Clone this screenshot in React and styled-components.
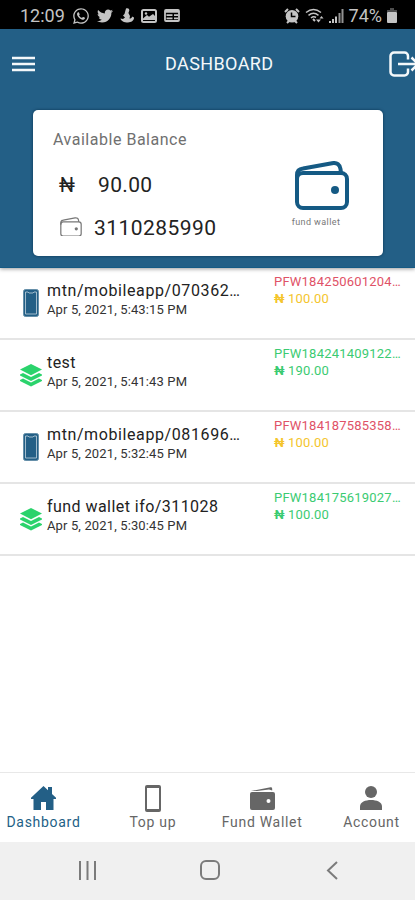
import React from 'react';
import styled, { createGlobalStyle } from 'styled-components';
import { FaWhatsapp, FaTwitter } from 'react-icons/fa';

const blue = '#235f86';
const darkBlue = '#155a84';
const grey = '#666';

const GlobalStyle = createGlobalStyle`
  body {
    margin: 0;
    font-family: Roboto, sans-serif;
    color: #222;
    background: #fff;
  }

  svg {
    display: block;
    flex: none;
  }
`;

const Screen = styled.div`
  display: flex;
  flex-direction: column;
  width: 415px;
  height: 900px;
  overflow: hidden;
`;

const StatusBar = styled.div`
  display: flex;
  justify-content: space-between;
  align-items: center;
  box-sizing: border-box;
  height: 29px;
  padding: 2px 18px 0 20px;
  background: #000;
  color: #c4c4c4;
  font-size: 18px;
`;

const StatusGroup = styled.div`
  display: flex;
  align-items: center;
  gap: ${({ gap }) => gap}px;
`;

const Hero = styled.header`
  height: 239px;
  flex: none;
  background: ${blue};
  box-shadow: 0 1px 4px rgba(0, 0, 0, 0.4);
  border-bottom: 1px solid ${darkBlue};
  box-sizing: border-box;
`;

const TitleBar = styled.div`
  display: grid;
  grid-template-columns: 60px 1fr 34px;
  align-items: center;
  height: 69px;
  color: #f4f8fa;
`;

const MenuButton = styled.div`
  padding-left: 12px;
`;

const Title = styled.h1`
  margin: 0;
  padding-left: 105px;
  font-size: 18px;
  font-weight: 400;
  letter-spacing: 0.4px;
`;

const LogoutButton = styled.div`
  padding-left: 8px;
  overflow: hidden;
`;

const Card = styled.section`
  display: flex;
  box-sizing: border-box;
  width: 350px;
  height: 146px;
  margin: 12px 0 0 33px;
  padding: 20px 20px 0;
  border-radius: 5px;
  background: #fff;
  box-shadow: 0 0 3px rgba(0, 40, 70, 0.8);
`;

const Balance = styled.div`
  width: 233px;
`;

const BalanceLabel = styled.div`
  margin-bottom: 11px;
  line-height: 20px;
  font-size: 16px;
  letter-spacing: 0.52px;
  color: #707070;
`;

const BalanceLine = styled.div`
  display: grid;
  grid-template-columns: ${({ indent }) => indent}px auto;
  align-items: center;
  height: ${({ height }) => height}px;
  padding-left: 6px;
  font-size: 21px;
  letter-spacing: ${({ spacing }) => spacing}px;
`;

const Naira = styled.span`
  font-size: 20px;
`;

const WalletIcon = styled.span`
  padding: 0 0 2px 1px;
  color: #777;
`;

const FundButton = styled.div`
  display: flex;
  flex-direction: column;
  align-items: center;
  width: 60px;
  padding: 31px 0 0 6px;
  color: ${darkBlue};
`;

const FundLabel = styled.span`
  margin: 6px 12px 0 0;
  font-size: 9px;
  line-height: 12px;
  letter-spacing: 0.4px;
  white-space: nowrap;
  color: #777;
`;

const List = styled.main`
  flex: 1;
`;

const Item = styled.div`
  display: grid;
  grid-template-columns: 47px 227px 141px;
  box-sizing: border-box;
  height: 72px;
  border-bottom: 2px solid #e5e5e5;
`;

const ItemIcon = styled.div`
  display: flex;
  justify-content: center;
  padding: ${({ top }) => top}px 0 0 15px;
`;

const ItemName = styled.div`
  margin-top: 13px;
  line-height: 20px;
  font-size: 16px;
  letter-spacing: ${({ wide }) => (wide ? 0.6 : 0.45)}px;
`;

const ItemDate = styled.div`
  line-height: 18px;
  font-size: 13px;
  letter-spacing: 0.13px;
  color: #333;
`;

const Reference = styled.div`
  margin-top: 6px;
  line-height: 16px;
  font-size: 13px;
  letter-spacing: 0.22px;
  color: ${({ failed }) => (failed ? '#df5267' : '#3bcb72')};
`;

const Amount = styled.div`
  line-height: 17px;
  font-size: 13px;
  letter-spacing: 0.15px;
  color: ${({ failed }) => (failed ? '#f4c52d' : '#3bcb72')};
`;

const AmountSign = styled.span`
  font-weight: 700;
`;

const Tabs = styled.nav`
  display: grid;
  grid-template-columns: repeat(4, 87px);
  justify-content: space-between;
  flex: none;
  box-sizing: border-box;
  height: 70px;
  border-top: 1px solid #e8e8e8;
`;

const Tab = styled.div`
  display: flex;
  flex-direction: column;
  align-items: center;
  color: ${({ active }) => (active ? blue : grey)};
`;

const TabIcon = styled.div`
  display: flex;
  align-items: center;
  height: 28px;
  margin-top: 11px;
`;

const TabLabel = styled.span`
  margin-top: 1px;
  line-height: 18px;
  font-size: 14px;
  letter-spacing: 0.7px;
  white-space: nowrap;
`;

const SystemBar = styled.footer`
  display: flex;
  justify-content: space-between;
  align-items: center;
  flex: none;
  box-sizing: border-box;
  height: 58px;
  padding: 0 77px 2px 78px;
  background: #f0f0f0;
`;

const Swan = () => (
  <svg width="14" height="15" viewBox="0 0 14 15" fill="currentColor">
    <path d="M6 .5C8-.3 9.500.8 9.300 2.500L8.400 5 10 8l-.5 2.500c1.500 0 2.500-.5 2.500-2l2 1c.2 3-2.500 5-6 5C4 14.500 1 13 .5 10.500L3 11l2-1.500-2-2L4.500 6l.8-3z" />
  </svg>
);

const Photo = () => (
  <svg width="16" height="14" viewBox="0 0 16 14">
    <rect x="1" y="1" width="14" height="12" rx="1.500" fill="none" stroke="currentColor" strokeWidth="2" />
    <path d="M2 11V9.500L6 6l2 1.700L12 5l2 2v4z" fill="currentColor" />
    <circle cx="5" cy="4.500" r="1.200" fill="currentColor" />
  </svg>
);

const News = () => (
  <svg width="16" height="13" viewBox="0 0 16 13" fill="none" stroke="currentColor">
    <rect x="1" y="1" width="14" height="11" rx="1" strokeWidth="1.800" />
    <path d="M1 2.500h14" strokeWidth="2.500" />
    <path d="M2.500 6.200h6M2.500 9.300h6M10 6.200h4M10 9.300h4" strokeWidth="1.700" />
  </svg>
);

const Alarm = () => (
  <svg width="16" height="16" viewBox="0 0 16 16" fill="none">
    <path d="M1 4l3-3M15 4l-3-3M3 15l2-2M13 15l-2-2" stroke="currentColor" strokeWidth="2" />
    <circle cx="8" cy="8.200" r="6.300" fill="currentColor" />
    <path d="M7.500 4.500v4h4" stroke="#000" strokeWidth="1.500" />
  </svg>
);

const Wifi = () => (
  <svg width="19" height="15" viewBox="0 0 19 15" fill="none" stroke="currentColor" strokeWidth="1.500">
    <path d="M1 4.500Q8.500-1.500 16 4.500M3.500 7.300Q8.500 3.300 13.500 7.300M6 10Q8.500 8 11 9.500" />
    <path d="M8 11l2 2" strokeWidth="2" />
    <path d="M11 11.500h5l-2.500 3z" fill="currentColor" stroke="none" />
    <path d="M14.500 10.500h4L16.500 8z" fill="currentColor" stroke="none" />
  </svg>
);

const Signal = () => (
  <svg width="15" height="14" viewBox="0 0 15 14" stroke="currentColor" strokeWidth="2">
    <path d="M1 14v-2M4 14v-4M7 14V7.500" />
    <path d="M10.500 14V4M13.500 14V0" opacity="0.75" />
  </svg>
);

const Battery = () => (
  <svg width="10" height="15" viewBox="0 0 10 15" fill="currentColor">
    <path d="M3 0h4v2h3v2H0V2h3z" opacity="0.4" />
    <rect y="4" width="10" height="11" rx="1" />
  </svg>
);

const Menu = () => (
  <svg width="23" height="16" viewBox="0 0 23 16" stroke="currentColor" strokeWidth="2.500">
    <path d="M0 2h23M0 8h23M0 14h23" />
  </svg>
);

// The arrow head runs past the edge of the screen.
const Logout = () => (
  <svg width="30" height="26" viewBox="0 0 30 26" fill="none" stroke="currentColor" strokeWidth="2.500">
    <path d="M19 8.500V5a3.500 3.500 0 0 0-3.500-3.500H5A3.500 3.500 0 0 0 1.500 5v16A3.500 3.500 0 0 0 5 24.500h10.500A3.500 3.500 0 0 0 19 21v-3.500" />
    <path d="M9 13h20M22.500 6.500 29 13l-6.500 6.500" />
  </svg>
);

const OpenWallet = ({ width = 54, stroke = 4 }) => (
  <svg width={width} height={(width * 49) / 54} viewBox="0 0 54 49" fill="none" stroke="currentColor" strokeWidth={stroke}>
    <rect x="2" y="12" width="50" height="35" rx="6" />
    <path d="M2 19v-5c0-4 2-6 6-6.500L37 2.200c5-1 8 1.800 8.500 5.800l.5 4" />
    <circle cx="40" cy="29" r="4" fill="currentColor" stroke="none" />
  </svg>
);

const Phone = () => (
  <svg width="16" height="28" viewBox="0 0 16 28">
    <rect x="0.500" y="0.500" width="15" height="27" rx="2" fill="#235f86" stroke="#658fa9" />
    <path d="M2.500 3h2.500l1 1h4l1-1h2.500v22h-11z" fill="#235f86" stroke="#b0c7d5" strokeWidth="0.900" />
  </svg>
);

const Layers = () => (
  <svg width="22" height="23" viewBox="0 0 22 23" fill="#2bd36c">
    <path d="M11 0 22 5.500 11 11.200 0 5.500z" />
    <path d="M0 10.500 3 9l8 4.100L19 9l3 1.500v1L11 17 0 11.500z" />
    <path d="M0 16 3 14.500l8 4.100 8-4.100 3 1.500v1L11 22.500 0 17z" />
  </svg>
);

const House = () => (
  <svg width="25" height="24" viewBox="0 0 25 24" fill="currentColor">
    <path d="M12.500 0 17 4.200V1h4v6.900l4 3.800V13h-2.500v11H15v-8h-5v8H2.500V13H0v-1.300z" />
  </svg>
);

const Person = () => (
  <svg width="22" height="24" viewBox="0 0 22 24" fill="currentColor">
    <circle cx="11" cy="6" r="6" />
    <path d="M0 24v-3.500C0 16 5.500 14 11 14s11 2 11 6.500V24z" />
  </svg>
);

const PhoneOutline = () => (
  <svg width="16" height="27" viewBox="0 0 16 27">
    <path fillRule="evenodd" fill="currentColor" d="M2 0h12a2 2 0 0 1 2 2v23a2 2 0 0 1-2 2H2a2 2 0 0 1-2-2V2a2 2 0 0 1 2-2zm0 3v21h12V3z" />
  </svg>
);

const SolidWallet = () => (
  <svg width="25" height="23" viewBox="0 0 25 23">
    <path fillRule="evenodd" fill="currentColor" d="M2 5h21a2 2 0 0 1 2 2v14a2 2 0 0 1-2 2H2a2 2 0 0 1-2-2V7a2 2 0 0 1 2-2zm16.500 7a2 2 0 1 0 0 4 2 2 0 0 0 0-4z" />
    <path fill="currentColor" d="M1 4 20.500.3a1.500 1.500 0 0 1 1.700 1.500V3.500L19 2.600 7 4z" />
  </svg>
);

const Recents = () => (
  <svg width="19" height="19" viewBox="0 0 19 19" stroke="#7b7b7b" strokeWidth="2">
    <path d="M2 0v19M9.500 0v19M17 0v19" />
  </svg>
);

const HomeKey = () => (
  <svg width="20" height="20" viewBox="0 0 20 20" fill="none" stroke="#7b7b7b" strokeWidth="2">
    <rect x="1" y="1" width="18" height="18" rx="5" />
  </svg>
);

const BackKey = () => (
  <svg width="16" height="19" viewBox="-4 0 16 19" fill="none" stroke="#7b7b7b" strokeWidth="2">
    <path d="M11 1 2 9.500 11 18" />
  </svg>
);

const transactions = [
  { name: 'mtn/mobileapp/070362…', time: '5:43:15', reference: 'PFW184250601204…', amount: '100.00', failed: true },
  { name: 'test', time: '5:41:43', reference: 'PFW184241409122…', amount: '190.00' },
  { name: 'mtn/mobileapp/081696…', time: '5:32:45', reference: 'PFW184187585358…', amount: '100.00', failed: true },
  { name: 'fund wallet ifo/311028', time: '5:30:45', reference: 'PFW184175619027…', amount: '100.00' },
];

const tabs = [
  { label: 'Dashboard', icon: <House />, active: true },
  { label: 'Top up', icon: <PhoneOutline /> },
  { label: 'Fund Wallet', icon: <SolidWallet /> },
  { label: 'Account', icon: <Person /> },
];

const Transaction = ({ name, time, reference, amount, failed }) => (
  <Item>
    <ItemIcon top={failed ? 21 : 24}>
      {failed ? <Phone /> : <Layers />}
    </ItemIcon>
    <div>
      <ItemName wide={failed}>{name}</ItemName>
      <ItemDate>Apr 5, 2021, {time} PM</ItemDate>
    </div>
    <div>
      <Reference failed={failed}>{reference}</Reference>
      <Amount failed={failed}>
        <AmountSign>₦</AmountSign> {amount}
      </Amount>
    </div>
  </Item>
);

export default () => (
  <Screen>
    <GlobalStyle />
    <StatusBar>
      <StatusGroup gap={7}>
        <span>12:09</span>
        <FaWhatsapp size={18} />
        <FaTwitter size={16} />
        <Swan />
        <Photo />
        <News />
      </StatusGroup>
      <StatusGroup gap={5}>
        <Alarm />
        <Wifi />
        <Signal />
        <span>74%</span>
        <Battery />
      </StatusGroup>
    </StatusBar>
    <Hero>
      <TitleBar>
        <MenuButton><Menu /></MenuButton>
        <Title>DASHBOARD</Title>
        <LogoutButton><Logout /></LogoutButton>
      </TitleBar>
      <Card>
        <Balance>
          <BalanceLabel>Available Balance</BalanceLabel>
          <BalanceLine height={48} indent={39} spacing={0.35}>
            <Naira>₦</Naira>
            <span>90.00</span>
          </BalanceLine>
          <BalanceLine height={37} indent={35} spacing={0.45}>
            <WalletIcon><OpenWallet width={22} stroke={3} /></WalletIcon>
            <span>3110285990</span>
          </BalanceLine>
        </Balance>
        <FundButton>
          <OpenWallet />
          <FundLabel>fund wallet</FundLabel>
        </FundButton>
      </Card>
    </Hero>
    <List>
      {transactions.map(item => (
        <Transaction key={item.reference} {...item} />
      ))}
    </List>
    <Tabs>
      {tabs.map(({ label, icon, active }) => (
        <Tab key={label} active={active}>
          <TabIcon>{icon}</TabIcon>
          <TabLabel>{label}</TabLabel>
        </Tab>
      ))}
    </Tabs>
    <SystemBar>
      <Recents />
      <HomeKey />
      <BackKey />
    </SystemBar>
  </Screen>
);
